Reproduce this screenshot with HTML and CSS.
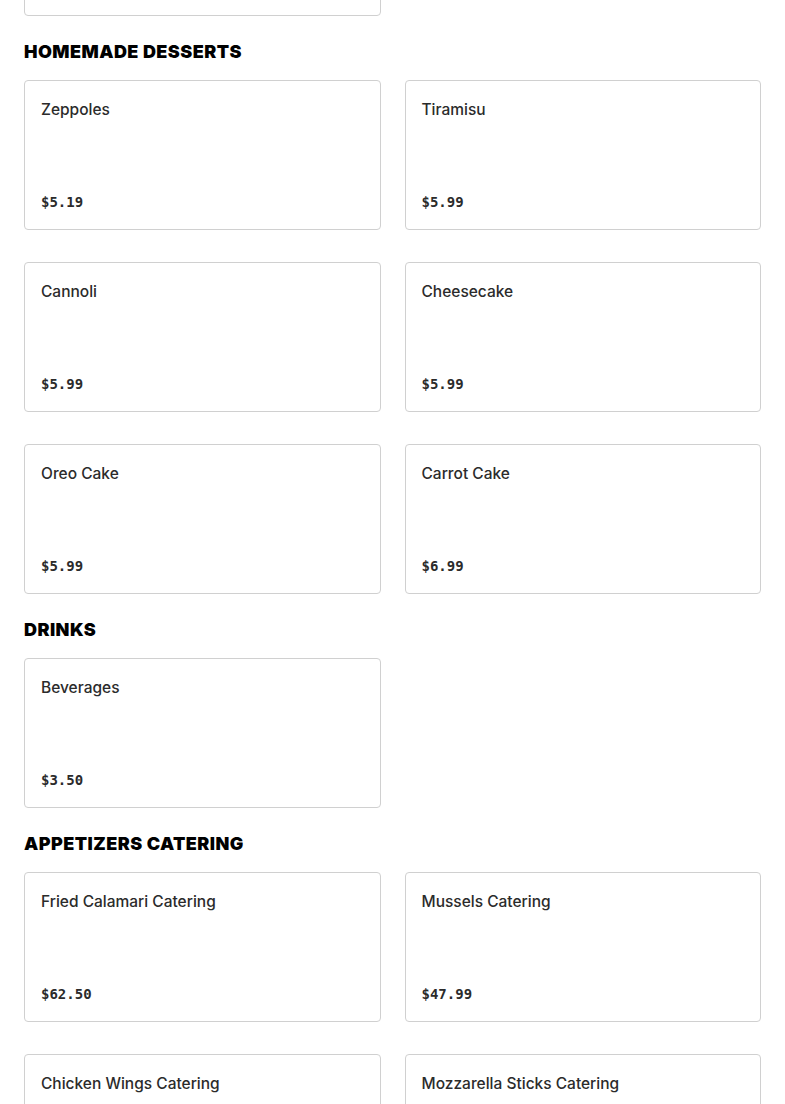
FILE: index.html
```html
<!DOCTYPE html>
<html lang="en">
<head>
<meta charset="utf-8">
<title>Menu</title>
<link rel="stylesheet" href="styles.css">
</head>
<body>
<main class="menu">
  <div class="grid">
    <div class="card card-prev"></div>
  </div>

  <section class="section">
    <h2 class="section-title">HOMEMADE DESSERTS</h2>
    <div class="grid">
      <div class="card"><div class="name">Zeppoles</div><div class="price">$5.19</div></div>
      <div class="card"><div class="name">Tiramisu</div><div class="price">$5.99</div></div>
      <div class="card"><div class="name">Cannoli</div><div class="price">$5.99</div></div>
      <div class="card"><div class="name">Cheesecake</div><div class="price">$5.99</div></div>
      <div class="card"><div class="name">Oreo Cake</div><div class="price">$5.99</div></div>
      <div class="card"><div class="name">Carrot Cake</div><div class="price">$6.99</div></div>
    </div>
  </section>

  <section class="section">
    <h2 class="section-title">DRINKS</h2>
    <div class="grid">
      <div class="card"><div class="name">Beverages</div><div class="price">$3.50</div></div>
    </div>
  </section>

  <section class="section">
    <h2 class="section-title">APPETIZERS CATERING</h2>
    <div class="grid">
      <div class="card"><div class="name">Fried Calamari Catering</div><div class="price">$62.50</div></div>
      <div class="card"><div class="name">Mussels Catering</div><div class="price">$47.99</div></div>
      <div class="card"><div class="name">Chicken Wings Catering</div><div class="price">$17.99</div></div>
      <div class="card"><div class="name">Mozzarella Sticks Catering</div><div class="price">$39.99</div></div>
    </div>
  </section>
</main>
</body>
</html>
```

FILE: styles.css
```css
* { box-sizing: border-box; }
html, body { margin: 0; padding: 0; background: #fff; }
body { overflow: hidden; }
.menu { padding: 0 24px; }
.grid {
  display: grid;
  grid-template-columns: 1fr 1fr;
  column-gap: 24px;
  row-gap: 32px;
}
.card {
  height: 150px;
  border: 1px solid #d0d0d0;
  border-radius: 4px;
  padding: 17px 16px 16px;
  display: flex;
  flex-direction: column;
  justify-content: space-between;
  background: #fff;
}
.card-prev { margin-top: -134px; }
.section-title {
  margin: 24px 0 16px;
  font-family: Inter, "Liberation Sans", sans-serif;
  font-weight: 900;
  font-size: 18px;
  line-height: 24px;
  letter-spacing: 0.45px;
  color: #000;
}
.name {
  font-family: Inter, "Noto Sans", sans-serif;
  font-weight: 500;
  font-size: 15.5px;
  line-height: 24px;
  color: #2b2b2b;
}
.price {
  font-family: "DejaVu Sans Mono", "Liberation Mono", monospace;
  font-weight: 700;
  font-size: 14px;
  line-height: 20px;
  color: #2b2b2b;
  margin-bottom: 1px;
}
```
